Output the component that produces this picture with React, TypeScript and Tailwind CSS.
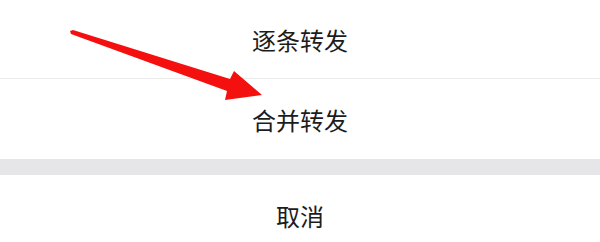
import React from "react";

export default function App() {
  const font = { fontFamily: '"Noto Sans CJK SC", "Noto Sans", sans-serif' };
  return (
    <div className="relative w-[600px] h-[242px] overflow-hidden bg-white" style={font}>
      <div className="flex flex-col">
        <div className="h-[79px] flex items-center justify-center pt-[2px] text-[24px] text-[#1c1c1c] border-b border-[#ececec]">
          逐条转发
        </div>
        <div className="h-[80px] flex items-center justify-center pt-[2px] text-[24px] text-[#1c1c1c]">
          合并转发
        </div>
        <div className="h-[16px] bg-[#e6e5e7]" />
        <div className="h-[82px] flex items-center justify-center text-[24px] text-[#1c1c1c]">
          取消
        </div>
      </div>
      <svg className="absolute left-0 top-0" width="600" height="242" viewBox="0 0 600 242">
        <polygon
          points="70,31 73,30 230,79 234,71 262,95 225,100 227,91 71,34"
          fill="#f51010"
        />
      </svg>
    </div>
  );
}
